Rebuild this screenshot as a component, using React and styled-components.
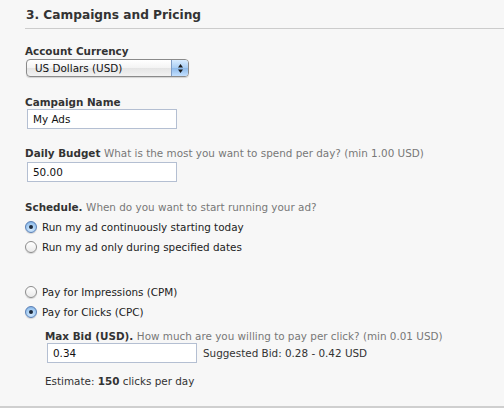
import React from 'react';
import styled, { createGlobalStyle } from 'styled-components';

const GlobalStyle = createGlobalStyle`
  html, body {
    margin: 0;
    padding: 0;
    background: #f7f7f7;
  }
  body {
    font-family: "DejaVu Sans", "Lucida Grande", Verdana, sans-serif;
    font-size: 10.4px;
    color: #333;
  }
`;

const Page = styled.div`
  width: 504px;
  height: 408px;
  box-sizing: border-box;
  background: #f7f7f7;
  border-bottom: 2px solid #cfcfcf;
  overflow: hidden;
`;

const Section = styled.div`
  padding: 8px 0 0 25px;
`;

const Heading = styled.h2`
  margin: 0;
  padding: 0 0 5px 1px;
  font-size: 12.2px;
  line-height: 15px;
  font-weight: bold;
  color: #333;
  border-bottom: 1px solid #cccccc;
`;

const Field = styled.div`
  margin-top: ${(p) => p.$top || 0}px;
  padding-left: ${(p) => p.$indent || 0}px;
`;

const Label = styled.div`
  font-weight: bold;
  color: #333;
  line-height: 13px;
  margin-bottom: ${(p) => p.$gap ?? 1}px;
`;

const Hint = styled.span`
  font-weight: normal;
  color: #777;
`;

const TextInput = styled.input`
  display: block;
  box-sizing: border-box;
  width: 150px;
  height: 20px;
  margin: 0 0 0 2px;
  padding: 2px 5px;
  border: 1px solid #b4bfd2;
  background: #fff;
  font-family: inherit;
  font-size: 10.4px;
  color: #111;
  outline: none;
`;

const SelectBox = styled.div`
  display: flex;
  box-sizing: border-box;
  width: 163px;
  height: 18px;
  margin-left: 1px;
  border: 1px solid #8a8a8a;
  border-radius: 4px;
  overflow: hidden;
  background: linear-gradient(#ffffff, #f3f3f3 50%, #e4e4e4 51%, #f2f2f2);
  box-shadow: 0 1px 1px rgba(0, 0, 0, 0.15);
`;

const SelectText = styled.div`
  flex: 1;
  padding-left: 8px;
  line-height: 16px;
  color: #111;
`;

const SelectArrow = styled.div`
  width: 16px;
  border-left: 1px solid #7f9dc6;
  background: linear-gradient(#d9ecff, #a8cdf3 50%, #8ebaea 51%, #c3e0ff);
  display: flex;
  align-items: center;
  justify-content: center;
`;

const RadioRow = styled.label`
  display: flex;
  align-items: center;
  height: 20px;
  color: #222;
`;

const RadioDot = styled.span`
  box-sizing: border-box;
  width: 12px;
  height: 12px;
  border-radius: 50%;
  margin-right: 5px;
  display: flex;
  align-items: center;
  justify-content: center;
  border: 1px solid ${(p) => (p.$on ? '#5a7fb5' : '#8c8c8c')};
  background: ${(p) =>
    p.$on
      ? 'radial-gradient(circle at 50% 70%, #d8ecff, #9fc8f0 60%, #6c9fd8)'
      : 'linear-gradient(#ffffff, #e9e9e9)'};
  box-shadow: 0 1px 1px rgba(0, 0, 0, 0.15);

  &::after {
    content: '';
    display: ${(p) => (p.$on ? 'block' : 'none')};
    width: 4px;
    height: 4px;
    border-radius: 50%;
    background: #1d2a3c;
  }
`;

const InlineRow = styled.div`
  display: flex;
  align-items: center;
  gap: 6px;
`;

const Suggested = styled.span`
  color: #333;
`;

const Estimate = styled.div`
  margin-top: 12px;
  line-height: 13px;
  color: #333;
  b {
    font-weight: bold;
  }
`;

function Radio({ on, children }) {
  return (
    <RadioRow>
      <RadioDot $on={on} />
      {children}
    </RadioRow>
  );
}

export default function App() {
  return (
    <Page>
      <GlobalStyle />
      <Section>
        <Heading>3. Campaigns and Pricing</Heading>

        <Field $top={16}>
          <Label>Account Currency</Label>
          <SelectBox>
            <SelectText>US Dollars (USD)</SelectText>
            <SelectArrow>
              <svg width="7" height="11" viewBox="0 0 7 11">
                <path d="M3.5 1 L6 4.5 L1 4.5 Z" fill="#1a1a1a" />
                <path d="M3.5 10 L6 6.5 L1 6.5 Z" fill="#1a1a1a" />
              </svg>
            </SelectArrow>
          </SelectBox>
        </Field>

        <Field $top={19}>
          <Label $gap={0}>Campaign Name</Label>
          <TextInput defaultValue="My Ads" />
        </Field>

        <Field $top={18}>
          <Label $gap={2}>
            Daily Budget <Hint>What is the most you want to spend per day? (min 1.00 USD)</Hint>
          </Label>
          <TextInput defaultValue="50.00" />
        </Field>

        <Field $top={19}>
          <Label $gap={3}>
            Schedule. <Hint>When do you want to start running your ad?</Hint>
          </Label>
          <Radio on>Run my ad continuously starting today</Radio>
          <Radio>Run my ad only during specified dates</Radio>
        </Field>

        <Field $top={25}>
          <Radio>Pay for Impressions (CPM)</Radio>
          <Radio on>Pay for Clicks (CPC)</Radio>
        </Field>

        <Field $top={8} $indent={20}>
          <Label $gap={0}>
            Max Bid (USD). <Hint>How much are you willing to pay per click? (min 0.01 USD)</Hint>
          </Label>
          <InlineRow>
            <TextInput defaultValue="0.34" />
            <Suggested>Suggested Bid: 0.28 - 0.42 USD</Suggested>
          </InlineRow>
          <Estimate>
            Estimate: <b>150</b> clicks per day
          </Estimate>
        </Field>
      </Section>
    </Page>
  );
}
